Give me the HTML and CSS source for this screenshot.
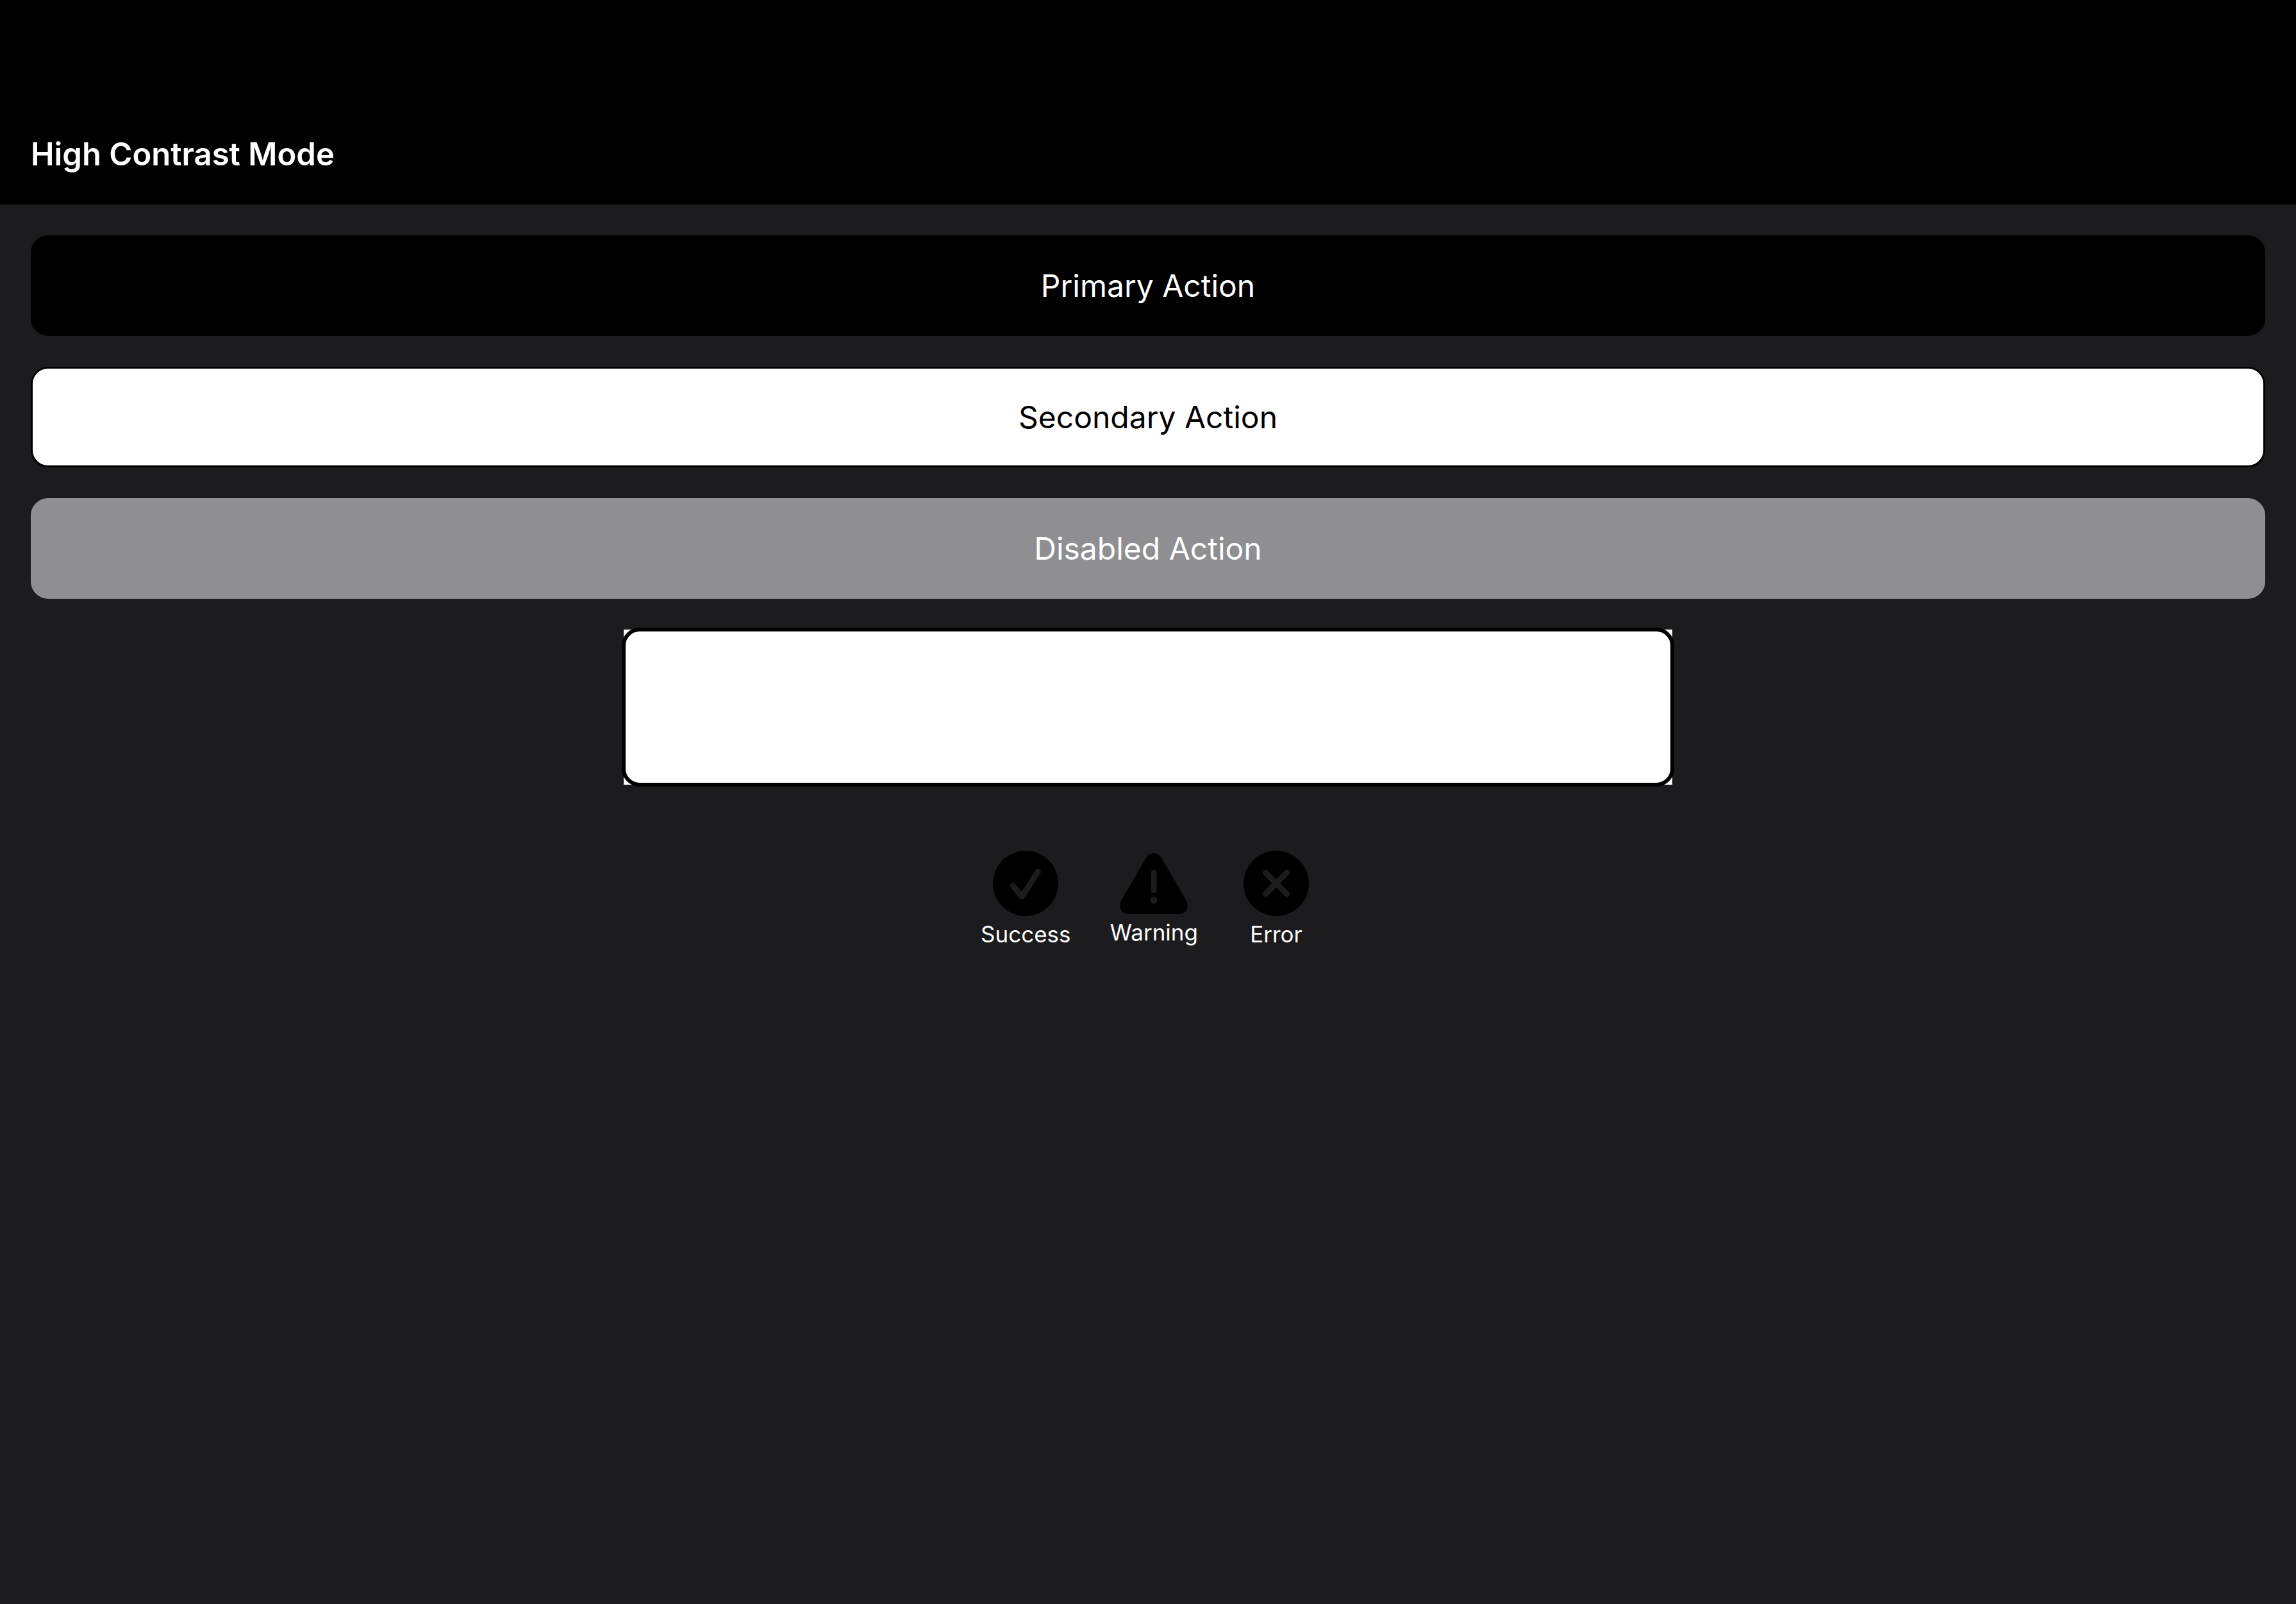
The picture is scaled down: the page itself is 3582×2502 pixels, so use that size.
FILE: index.html
```html
<!DOCTYPE html>
<html lang="en">
<head>
<meta charset="utf-8">
<meta name="viewport" content="width=device-width, initial-scale=1">
<title>High Contrast Mode</title>
<link rel="stylesheet" href="styles.css">
</head>
<body>
<header class="header">
  <h1 class="title">High Contrast Mode</h1>
</header>
<main class="content">
  <button class="action action-primary" type="button">Primary Action</button>
  <button class="action action-secondary" type="button">Secondary Action</button>
  <button class="action action-disabled" type="button" disabled>Disabled Action</button>
  <section class="card"></section>
  <ul class="statuses">
    <li class="status">
      <svg class="icon" width="122" height="116" viewBox="0 0 122 116" aria-hidden="true">
        <circle class="shape" cx="61" cy="58" r="51"/>
        <path class="mark" d="M41 61.300 55.400 78.500 80.300 39.700"/>
      </svg>
      <span class="label">Success</span>
    </li>
    <li class="status">
      <svg class="icon" width="122" height="110" viewBox="0 0 122 110" aria-hidden="true">
        <path class="shape" d="M61 8C66 8 70 10.500 72.800 15L111.700 81.500C113 84.500 113.500 87 113.500 90C113.500 97.500 108 103 100.500 103H21.500C14 103 8.500 97.500 8.500 90C8.500 87 9 84.500 10.300 81.500L49.200 15C52 10.500 56 8 61 8Z"/>
        <path class="mark" d="M61 38.500V65.500"/>
        <circle class="dot" cx="61" cy="81" r="5.500"/>
      </svg>
      <span class="label">Warning</span>
    </li>
    <li class="status">
      <svg class="icon" width="122" height="116" viewBox="0 0 122 116" aria-hidden="true">
        <circle class="shape" cx="61" cy="58" r="51"/>
        <path class="mark" d="M44.500 41.500 77.500 74.500M77.500 41.500 44.500 74.500"/>
      </svg>
      <span class="label">Error</span>
    </li>
  </ul>
</main>
</body>
</html>
```
FILE: styles.css
```css
* {
  box-sizing: border-box;
}

body {
  margin: 0;
  min-height: 100vh;
  background: #1c1c1e;
  color: #fff;
  font-family: Inter, "Liberation Sans", sans-serif;
}

.header {
  padding: 210px 48px 48px;
  background: #000;
}

.title {
  margin: 0;
  font-size: 49px;
  line-height: 61px;
  font-weight: 600;
}

.content {
  display: flex;
  flex-direction: column;
  gap: 48px;
  padding: 48px;
}

.action {
  width: 100%;
  padding: 45px;
  border: 3px solid #000;
  border-radius: 27px;
  font: inherit;
  font-size: 48px;
  line-height: 61px;
  text-align: center;
}

.action-primary {
  background: #000;
  color: #fff;
}

.action-secondary {
  background: #fff;
  color: #000;
}

.action-disabled {
  border-color: #8e8e93;
  background: #8e8e93;
  color: #fff;
}

.card {
  position: relative;
  align-self: center;
  width: 100%;
  max-width: 1636px;
  min-height: 242px;
  padding: 48px;
  background: #fff;
}

/* The rounded outline straddles the square edge of the card. */
.card::after {
  content: "";
  position: absolute;
  inset: -3px;
  border: 6px solid #000;
  border-radius: 28px;
}

.statuses {
  display: flex;
  justify-content: center;
  align-items: center;
  gap: 61px;
  margin: 0;
  padding: 48px;
  list-style: none;
}

.status {
  display: flex;
  flex-direction: column;
  align-items: center;
}

.icon {
  display: block;
}

.shape {
  fill: #000;
}

.mark {
  fill: none;
  stroke: #1c1c1e;
  stroke-width: 9;
  stroke-linecap: round;
  stroke-linejoin: round;
}

.dot {
  fill: #1c1c1e;
}

.label {
  font-size: 35px;
  line-height: 43px;
}
```
